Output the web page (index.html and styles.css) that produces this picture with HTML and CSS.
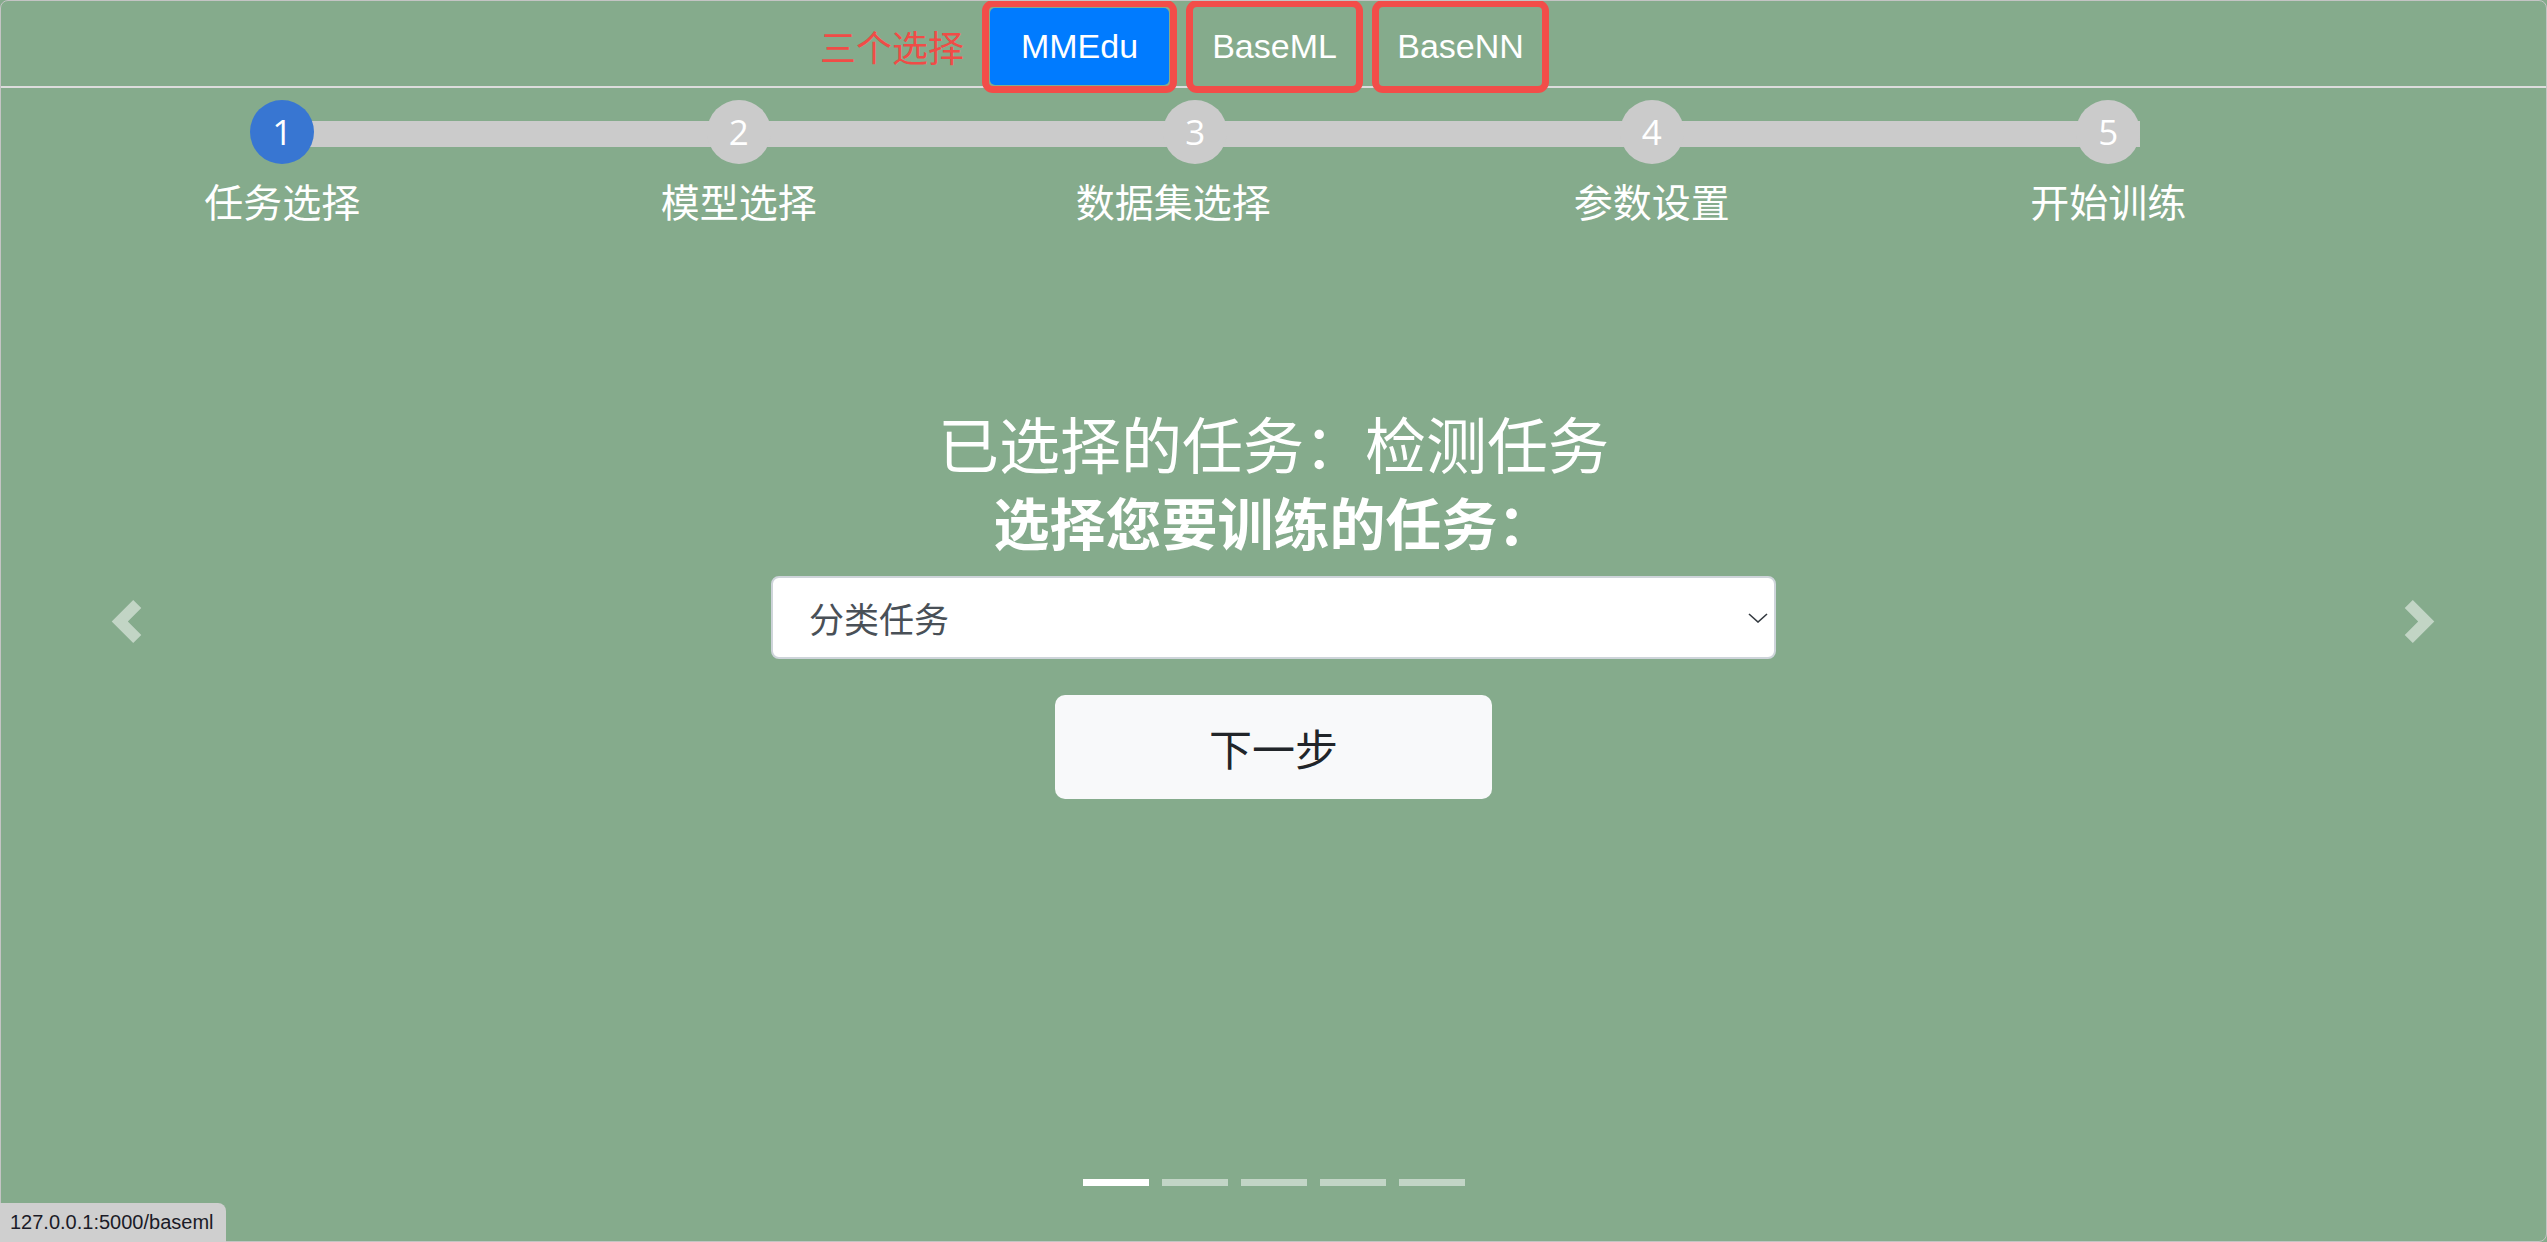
FILE: index.html
```html
<!DOCTYPE html>
<html lang="zh-CN">
<head>
  <meta charset="UTF-8" />
  <meta name="viewport" content="width=device-width, initial-scale=1" />
  <title>模型训练</title>
  <link rel="stylesheet" href="styles.css">
</head>
<body>
  <div class="page">
    <div class="topnav">
      <span class="tip">三个选择</span>
      <span class="frame"><a class="lib activo" href="#">MMEdu</a></span>
      <span class="frame"><a class="lib" href="#">BaseML</a></span>
      <span class="frame"><a class="lib" href="#">BaseNN</a></span>
    </div>

    <ul class="steps">
      <li class="step activo"><span class="num">1</span><span class="nombre">任务选择</span></li>
      <li class="step"><span class="num">2</span><span class="nombre">模型选择</span></li>
      <li class="step"><span class="num">3</span><span class="nombre largo">数据集选择</span></li>
      <li class="step"><span class="num">4</span><span class="nombre">参数设置</span></li>
      <li class="step"><span class="num">5</span><span class="nombre">开始训练</span></li>
    </ul>

    <div class="tarea">
      <h2 class="elegido">已选择的任务：检测任务</h2>
      <h3 class="pregunta">选择您要训练的任务：</h3>
      <div class="combo">
        <select id="task">
          <option>分类任务</option>
          <option>检测任务</option>
        </select>
        <svg class="flecha" width="20" height="10" viewBox="0 0 20 10"><path d="M1 1l9 8 9-8" fill="none" stroke="#343a40" stroke-width="1.6"/></svg>
      </div>
      <button class="siguiente">下一步</button>
    </div>

    <a class="control prev" href="#"><svg width="43" height="43" viewBox="0 0 8 8"><path d="M5.25 0l-4 4 4 4 1.5-1.5L4.25 4l2.5-2.5L5.25 0z"/></svg></a>
    <a class="control next" href="#"><svg width="43" height="43" viewBox="0 0 8 8"><path d="M2.75 0l-1.5 1.5L3.75 4l-2.5 2.5L2.75 8l4-4-4-4z"/></svg></a>

    <ol class="indicadores">
      <li class="activo"></li>
      <li></li>
      <li></li>
      <li></li>
      <li></li>
    </ol>
  </div>

  <div class="estado">127.0.0.1:5000/baseml</div>
</body>
</html>
```

FILE: styles.css
```css
body {
  font-family: "Open Sans", "Noto Sans CJK SC", sans-serif;
  background: #85ab8c;
  margin: 0;
  padding: 0;
  color: #fff;
}
.page {
  position: relative;
  height: 100vh;
  box-sizing: border-box;
  border: 1px solid #c4c4c4;
  border-radius: 8px;
  overflow: hidden;
}

/* barra superior */
.topnav {
  display: flex;
  align-items: flex-start;
  height: 85px;
  padding-left: 819px;
  border-bottom: 2px solid #dcdcdc;
}
.tip {
  color: #f04c47;
  font-family: "Noto Sans CJK SC", sans-serif;
  font-size: 36px;
  line-height: 90px;
  margin-right: 18px;
}
.frame {
  display: block;
  margin: -1px 9px 0 0;
  padding: 1px;
  border: 7px solid #f24d49;
  border-radius: 11px;
}
.lib {
  display: flex;
  align-items: center;
  justify-content: center;
  width: 161px;
  height: 77px;
  color: #fff;
  font-family: "Liberation Sans", "Open Sans", sans-serif;
  font-size: 34px;
  text-decoration: none;
  border-radius: 5px;
}
.lib.activo {
  width: 179px;
  background: #007bff;
}

/* pasos */
.steps {
  position: relative;
  display: grid;
  grid-template-columns: repeat(5, 456.5px);
  margin: 0;
  padding: 12px 0 0 53px;
  list-style: none;
}
.steps::before {
  content: '';
  position: absolute;
  left: 281px;
  top: 33px;
  width: 1858px;
  height: 26px;
  background: #cbcbcb;
}
.step {
  position: relative;
  display: flex;
  flex-direction: column;
  align-items: center;
}
.num {
  width: 64px;
  height: 64px;
  border-radius: 50%;
  background: #cbcbcb;
  font-size: 35px;
  line-height: 64px;
  text-align: center;
}
.step.activo .num { background: #3876d2; }
.nombre {
  margin-top: 13px;
  font-family: "Noto Sans CJK SC", sans-serif;
  font-size: 39px;
  line-height: 47px;
}
.nombre.largo { padding-right: 44px; }

/* contenido */
.tarea {
  display: flex;
  flex-direction: column;
  align-items: center;
  margin-top: 183px;
  font-family: "Noto Sans CJK SC", sans-serif;
}
.elegido {
  margin: 0;
  font-size: 61px;
  font-weight: normal;
  line-height: 72px;
}
.pregunta {
  margin: 9px 0 0;
  font-size: 56px;
  font-weight: bold;
  line-height: 66px;
}
.combo {
  position: relative;
  margin-top: 22px;
}
.combo select {
  display: block;
  width: 1005px;
  height: 83px;
  padding: 0 36px;
  border: 2px solid #ced4da;
  border-radius: 8px;
  background: #fff;
  color: #495057;
  font-family: "Noto Sans CJK SC", sans-serif;
  font-size: 35px;
  appearance: none;
  -webkit-appearance: none;
}
.flecha {
  position: absolute;
  right: 8px;
  top: 37px;
}
.siguiente {
  margin-top: 36px;
  width: 437px;
  height: 104px;
  border: none;
  border-radius: 10px;
  background: #f8f9fa;
  color: #212529;
  font-family: "Noto Sans CJK SC", sans-serif;
  font-size: 43px;
  cursor: pointer;
}

/* carrusel */
.control {
  position: absolute;
  top: 599px;
  fill: #fff;
  opacity: 0.5;
}
.control svg { display: block; }
.prev { left: 104px; }
.next { right: 105px; }
.indicadores {
  position: absolute;
  left: 0;
  right: 0;
  bottom: 55px;
  display: flex;
  justify-content: center;
  gap: 13px;
  margin: 0;
  padding: 0;
  list-style: none;
}
.indicadores li {
  width: 66px;
  height: 7px;
  background: #fff;
  opacity: 0.5;
}
.indicadores li.activo { opacity: 1; }

.estado {
  position: fixed;
  left: 0;
  bottom: 0;
  width: 216px;
  height: 39px;
  padding-left: 10px;
  background: #cfcfcf;
  border-top-right-radius: 8px;
  color: #1b1b27;
  font-family: "Liberation Sans", sans-serif;
  font-size: 20px;
  line-height: 39px;
}
```
